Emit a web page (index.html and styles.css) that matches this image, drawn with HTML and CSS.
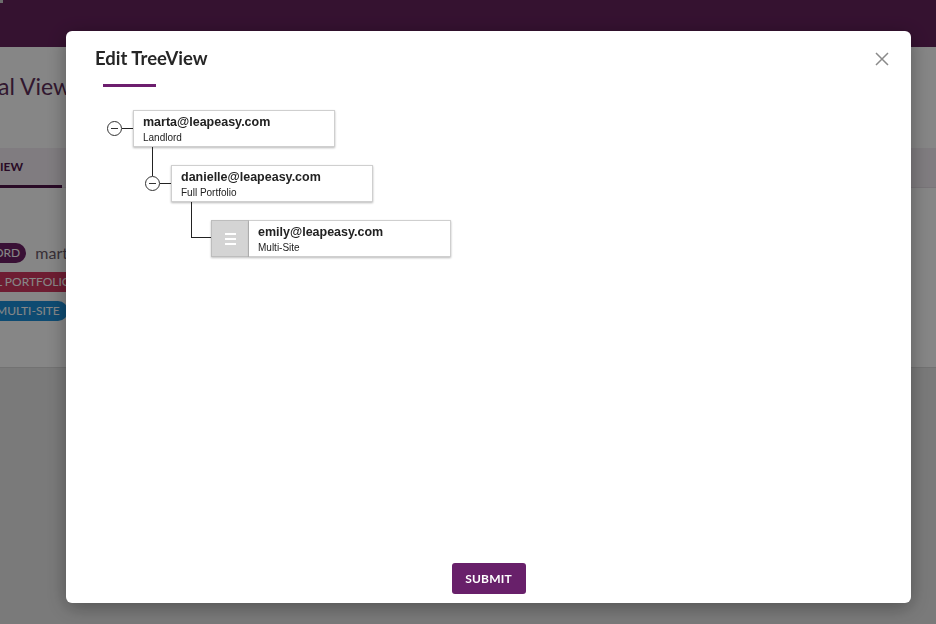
FILE: index.html
```html
<!DOCTYPE html>
<html>
<head>
<meta charset="utf-8">
<link rel="stylesheet" href="styles.css">
</head>
<body>
<div class="page">
  <header class="topbar"><span class="corner"></span></header>
  <section class="panel">
    <h1 class="page-title">al View</h1>
    <div class="tabs"><div class="tab">IEW</div></div>
    <div class="legend">
      <div class="legend-row"><span class="badge badge-landlord">ORD</span><span class="legend-name">marta@leapeasy.com</span></div>
      <div class="legend-row"><span class="badge badge-full">L PORTFOLIO</span></div>
      <div class="legend-row"><span class="badge badge-multi">MULTI-SITE</span></div>
    </div>
  </section>
</div>

<div class="overlay"></div>

<div class="modal">
  <div class="modal-head">
    <h2 class="modal-title">Edit TreeView</h2>
    <button class="close" aria-label="Close">
      <svg width="14" height="14" viewBox="0 0 14 14"><path d="M1 1 L13 13 M13 1 L1 13" stroke="#8a8a8a" stroke-width="1.5" fill="none"/></svg>
    </button>
  </div>
  <div class="title-bar"></div>

  <div class="tree">
    <div class="node">
      <div class="row">
        <span class="toggle"></span><span class="stem"></span>
        <div class="card"><div class="email">marta@leapeasy.com</div><div class="role">Landlord</div></div>
      </div>
      <div class="children">
        <div class="node">
          <div class="row">
            <span class="toggle"></span><span class="stem"></span>
            <div class="card"><div class="email">danielle@leapeasy.com</div><div class="role">Full Portfolio</div></div>
          </div>
          <div class="children leafs">
            <div class="node">
              <div class="row">
                <span class="elbow"></span>
                <span class="handle"><i></i><i></i><i></i></span>
                <div class="card card-leaf"><div class="email">emily@leapeasy.com</div><div class="role">Multi-Site</div></div>
              </div>
            </div>
          </div>
        </div>
      </div>
    </div>
  </div>

  <div class="modal-foot">
    <button class="submit">SUBMIT</button>
  </div>
</div>
</body>
</html>
```

FILE: styles.css
```css
* { box-sizing: border-box; }
html, body { margin: 0; padding: 0; }
body {
  width: 936px;
  height: 624px;
  overflow: hidden;
  background: #e7e7e7;
  font-family: "Lato", "Liberation Sans", sans-serif;
}

.page { width: 936px; }
.topbar {
  height: 47px;
  background: #65225c;
  position: relative;
}
.corner {
  position: absolute;
  left: 0; top: 0;
  width: 3px; height: 3px;
  background: #ccc;
}
.panel {
  background: #fdfdfd;
  height: 321px;
  border-bottom: 1px solid #d8d8d8;
  overflow: hidden;
}
.page-title {
  margin: 0;
  padding: 25px 0 0 0;
  margin-left: -2px;
  font-size: 23px;
  font-weight: 400;
  color: #5e2e59;
  line-height: 28px;
  height: 101px;
}
.tabs {
  height: 40px;
  background: #f1ebf1;
  border-bottom: 1px solid #e4dde4;
}
.tab {
  width: 62px;
  height: 40px;
  border-bottom: 3px solid #4e1348;
  font-size: 12px;
  font-weight: 700;
  color: #4e1348;
  line-height: 37px;
  text-align: left;
}
.legend {
  padding-top: 55px;
  display: flex;
  flex-direction: column;
  gap: 10px;
}
.legend-row { display: flex; align-items: center; height: 19px; }
.badge {
  display: inline-block;
  height: 20px;
  line-height: 20px;
  font-size: 12px;
  color: #fff;
}
.badge-landlord { background: #6c1f64; border-radius: 0 10px 10px 0; padding-right: 6px; margin-left: -6px; }
.badge-full { background: #d0375f; width: 120px; margin-left: -4px; }
.badge-multi { background: #1c8fd8; border-radius: 0 10px 10px 0; margin-left: -4px; padding-right: 8px; }
.legend-name { margin-left: 9px; font-size: 16px; color: #6a5a68; }

.overlay {
  position: fixed;
  inset: 0;
  background: rgba(0, 0, 0, 0.47);
}

.modal {
  position: fixed;
  left: 66px;
  top: 31px;
  width: 845px;
  height: 572px;
  background: #fff;
  border-radius: 6px;
  box-shadow: 0 4px 20px rgba(0, 0, 0, 0.35);
  display: flex;
  flex-direction: column;
}
.modal-head {
  display: flex;
  justify-content: space-between;
  align-items: flex-start;
  padding: 15px 22px 0 29px;
}
.modal-title {
  margin: 0;
  font-family: "Lato", sans-serif;
  font-size: 18.5px;
  font-weight: 700;
  color: #262626;
  line-height: 24px;
}
.close {
  border: 0;
  background: none;
  padding: 0;
  margin-top: 6px;
  width: 14px;
  height: 14px;
  cursor: pointer;
}
.close svg { display: block; }
.title-bar {
  width: 53px;
  height: 3px;
  margin: 14px 0 0 37px;
  background: #6d1e6e;
}

.tree {
  padding: 23px 0 0 41px;
  font-family: "Liberation Sans", Arial, sans-serif;
}
.row {
  display: flex;
  align-items: center;
}
.toggle {
  width: 15px;
  height: 15px;
  border: 1px solid #333;
  border-radius: 50%;
  position: relative;
  flex: none;
  background: #fff;
}
.toggle::after {
  content: "";
  position: absolute;
  left: 3px; right: 3px;
  top: 6px;
  height: 1px;
  background: #333;
}
.stem {
  width: 11px;
  height: 1px;
  background: #222;
  flex: none;
}
.card {
  width: 202px;
  height: 37px;
  border: 1px solid #cfcfcf;
  box-shadow: 0 1px 2px rgba(0, 0, 0, 0.28);
  background: #fff;
  padding: 4px 9px 0;
  flex: none;
}
.email {
  font-size: 12.5px;
  font-weight: 700;
  color: #222;
  line-height: 15px;
}
.role {
  font-size: 10px;
  color: #222;
  line-height: 13px;
  margin-top: 1px;
}
.children {
  margin-left: 38px;
  padding-top: 18px;
  position: relative;
}
.children::before {
  content: "";
  position: absolute;
  left: 7px;
  top: 0;
  width: 1px;
  height: 29px;
  background: #222;
}
.children.leafs::before { display: none; }
.elbow {
  align-self: flex-start;
  margin-top: -18px;
  margin-left: 8px;
  width: 20px;
  height: 36px;
  border-left: 1px solid #222;
  border-bottom: 1px solid #222;
  flex: none;
}
.handle {
  width: 38px;
  height: 37px;
  background: #d4d4d4;
  border: 1px solid #bdbdbd;
  box-shadow: 0 1px 2px rgba(0, 0, 0, 0.25);
  display: flex;
  flex-direction: column;
  align-items: center;
  justify-content: center;
  gap: 3px;
  flex: none;
}
.handle i {
  display: block;
  width: 11px;
  height: 2px;
  background: #fff;
}
.card-leaf { border-left: 0; }

.modal-foot {
  margin-top: auto;
  display: flex;
  justify-content: center;
  padding-bottom: 9px;
}
.submit {
  width: 74px;
  height: 31px;
  border: 0;
  border-radius: 3px;
  background: #68206a;
  color: #fff;
  font-family: "Lato", sans-serif;
  font-weight: 700;
  font-size: 12px;
  letter-spacing: 0.2px;
  cursor: pointer;
}
```
